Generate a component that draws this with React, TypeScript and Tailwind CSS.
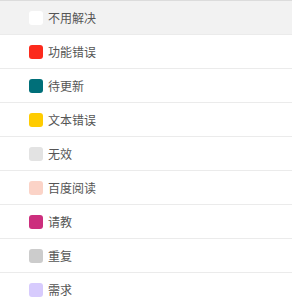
import React from "react";

const items: { label: string; color: string }[] = [
  { label: "不用解决", color: "bg-[#ffffff]" },
  { label: "功能错误", color: "bg-[#fc2a1c]" },
  { label: "待更新", color: "bg-[#006f79]" },
  { label: "文本错误", color: "bg-[#ffcc00]" },
  { label: "无效", color: "bg-[#e3e3e3]" },
  { label: "百度阅读", color: "bg-[#fbd3c7]" },
  { label: "请教", color: "bg-[#cc2e7d]" },
  { label: "重复", color: "bg-[#cccccc]" },
  { label: "需求", color: "bg-[#d7cbfd]" },
];

export default function App() {
  return (
    <div
      className="w-[292px] h-[306px] bg-white overflow-hidden"
      style={{ fontFamily: '"Noto Sans CJK SC", "Liberation Sans", sans-serif' }}
    >
      {items.map((it, i) => (
        <div
          key={it.label}
          className={`h-[34px] flex items-center pl-[29px] border-t ${
            i === 0 ? "border-[#dcdcdc] bg-[#f2f2f2]" : "border-[#ebebeb] bg-white"
          }`}
        >
          <span className={`w-[14px] h-[14px] rounded-[3px] ${it.color}`} />
          <span className="ml-[5px] text-[12px] leading-none text-[#555555]">{it.label}</span>
        </div>
      ))}
    </div>
  );
}
